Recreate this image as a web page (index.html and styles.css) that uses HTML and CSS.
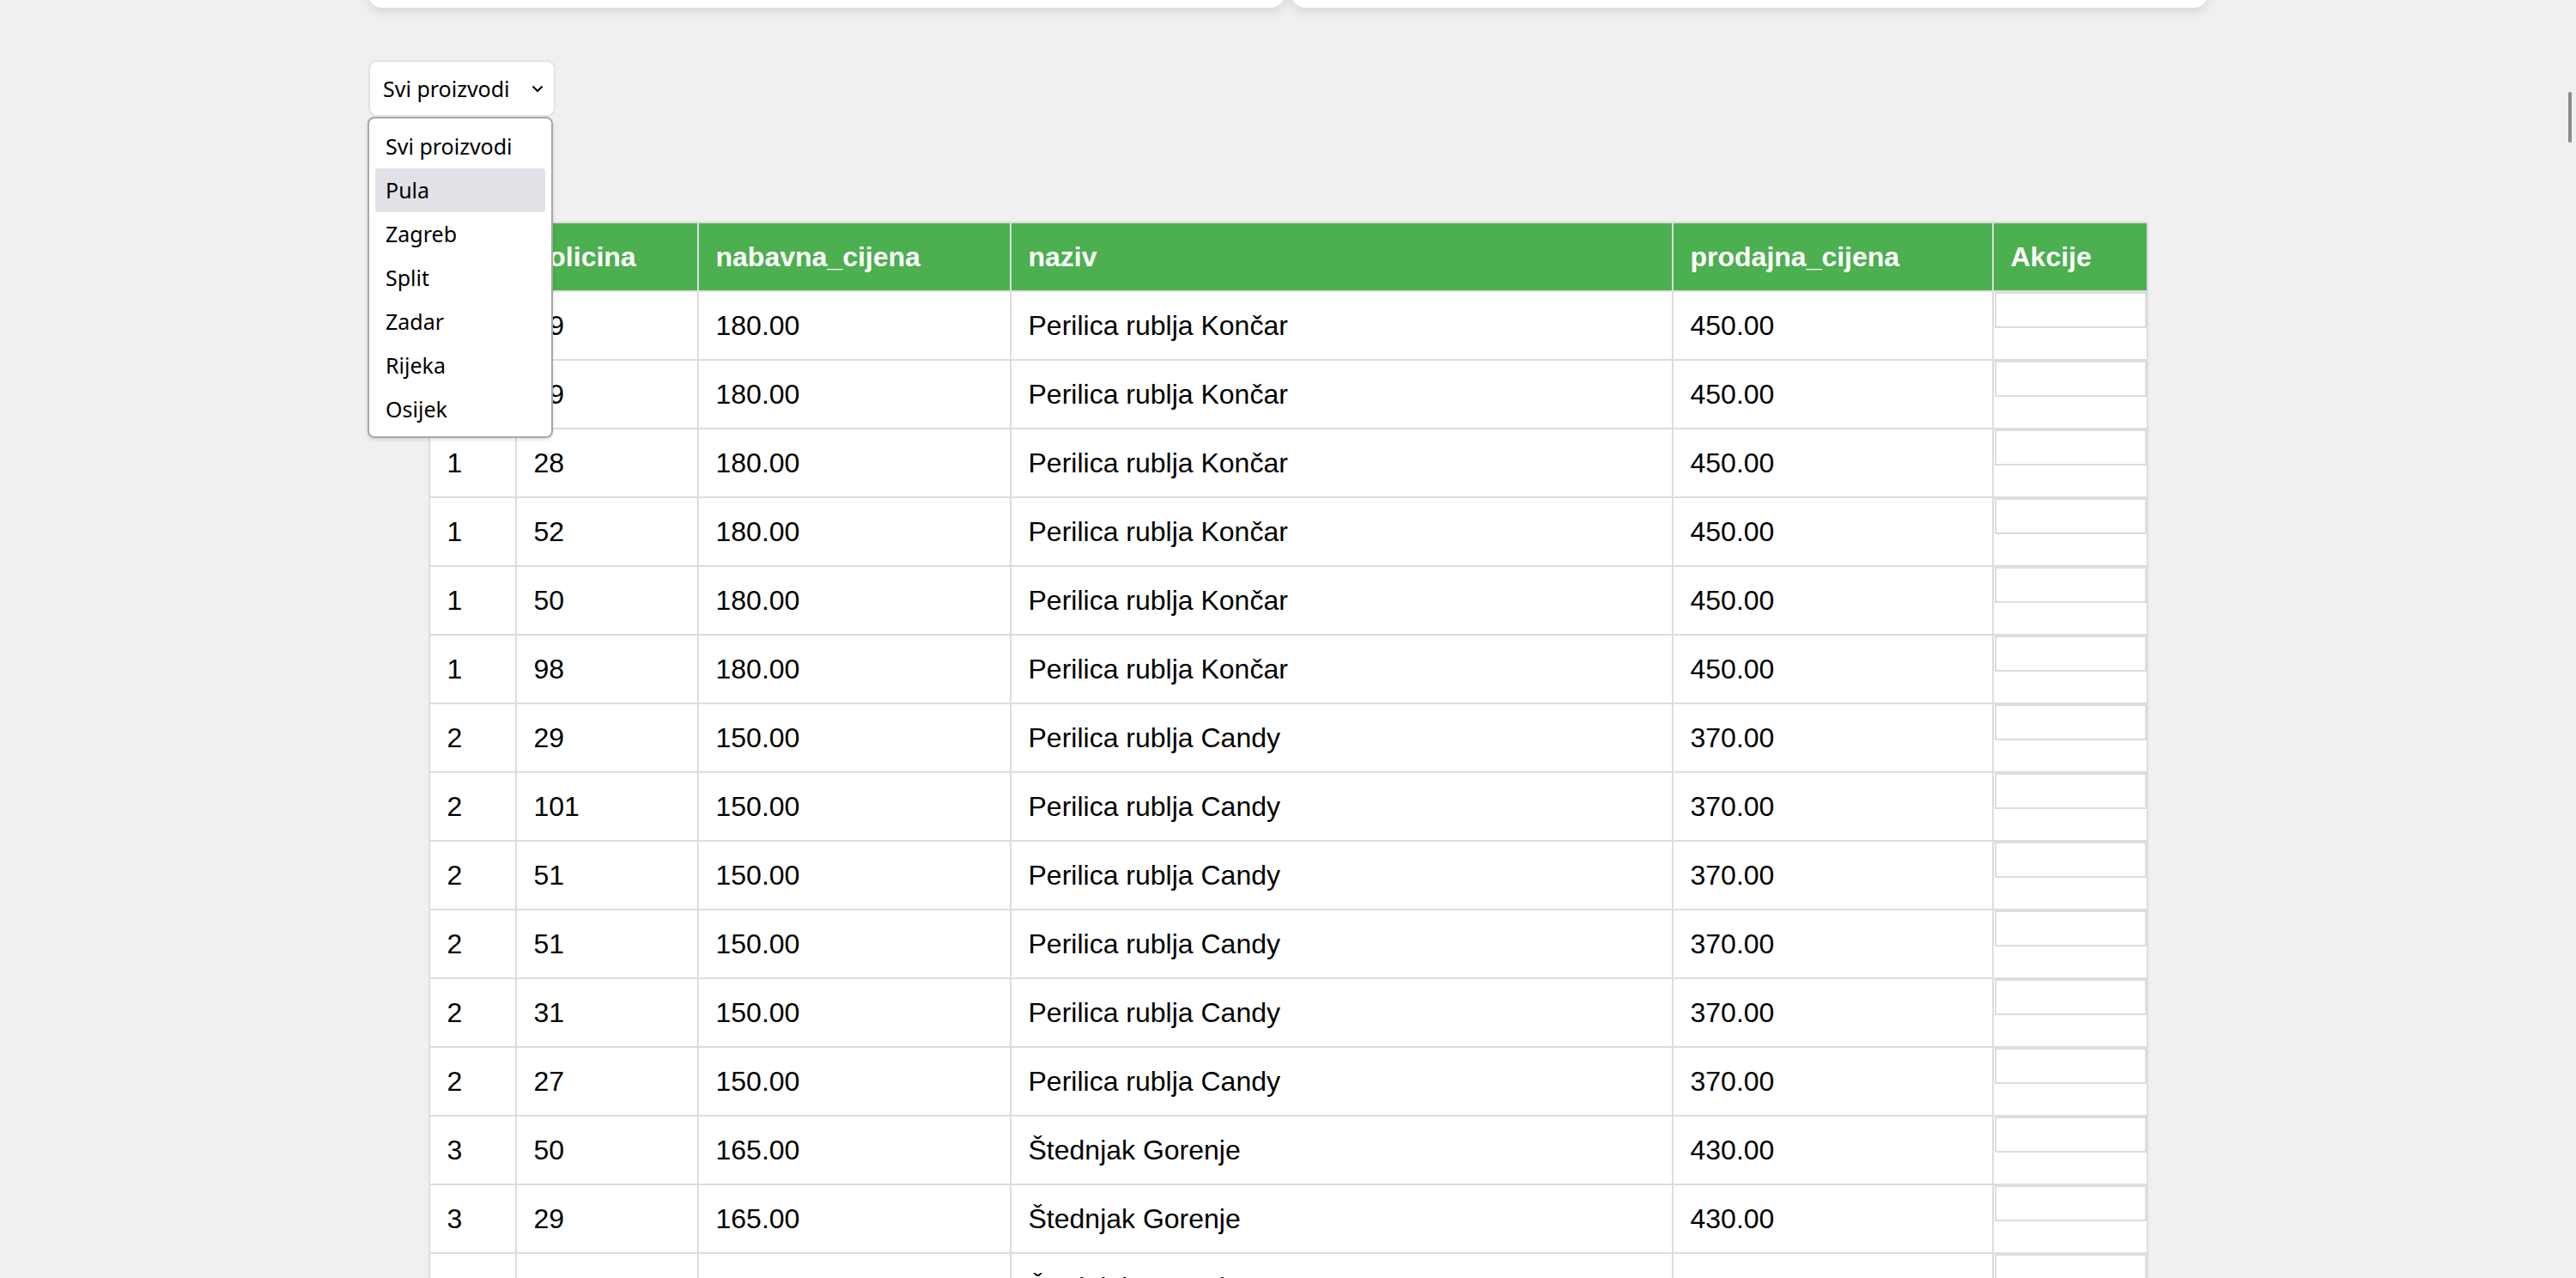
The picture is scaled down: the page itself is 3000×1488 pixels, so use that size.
FILE: index.html
```html
<!DOCTYPE html>
<html lang="hr">
<head>
<meta charset="utf-8">
<title>Proizvodi</title>
<link rel="stylesheet" href="styles.css">
</head>
<body>
<div class="wrap">
  <div class="cards">
    <div class="card"></div>
    <div class="card"></div>
  </div>
  <div class="filter">
    <div class="select">
      <span>Svi proizvodi</span>
      <svg class="chev" width="14" height="10" viewBox="0 0 14 10"><path d="M1.5 2.5 L7 8 L12.5 2.5" fill="none" stroke="#000" stroke-width="2"/></svg>
    </div>
    <div class="popup">
      <div class="opt">Svi proizvodi</div>
      <div class="opt hl">Pula</div>
      <div class="opt">Zagreb</div>
      <div class="opt">Split</div>
      <div class="opt">Zadar</div>
      <div class="opt">Rijeka</div>
      <div class="opt">Osijek</div>
    </div>
  </div>
</div>
<table class="grid">
  <colgroup>
    <col class="c1"><col class="c2"><col class="c3"><col class="c4"><col class="c5"><col class="c6">
  </colgroup>
  <thead>
    <tr><th>id</th><th>kolicina</th><th>nabavna_cijena</th><th>naziv</th><th>prodajna_cijena</th><th>Akcije</th></tr>
  </thead>
  <tbody>
    <tr><td>1</td><td>29</td><td>180.00</td><td>Perilica rublja Končar</td><td>450.00</td><td class="act"><div class="actbox"></div></td></tr>
    <tr><td>1</td><td>19</td><td>180.00</td><td>Perilica rublja Končar</td><td>450.00</td><td class="act"><div class="actbox"></div></td></tr>
    <tr><td>1</td><td>28</td><td>180.00</td><td>Perilica rublja Končar</td><td>450.00</td><td class="act"><div class="actbox"></div></td></tr>
    <tr><td>1</td><td>52</td><td>180.00</td><td>Perilica rublja Končar</td><td>450.00</td><td class="act"><div class="actbox"></div></td></tr>
    <tr><td>1</td><td>50</td><td>180.00</td><td>Perilica rublja Končar</td><td>450.00</td><td class="act"><div class="actbox"></div></td></tr>
    <tr><td>1</td><td>98</td><td>180.00</td><td>Perilica rublja Končar</td><td>450.00</td><td class="act"><div class="actbox"></div></td></tr>
    <tr><td>2</td><td>29</td><td>150.00</td><td>Perilica rublja Candy</td><td>370.00</td><td class="act"><div class="actbox"></div></td></tr>
    <tr><td>2</td><td>101</td><td>150.00</td><td>Perilica rublja Candy</td><td>370.00</td><td class="act"><div class="actbox"></div></td></tr>
    <tr><td>2</td><td>51</td><td>150.00</td><td>Perilica rublja Candy</td><td>370.00</td><td class="act"><div class="actbox"></div></td></tr>
    <tr><td>2</td><td>51</td><td>150.00</td><td>Perilica rublja Candy</td><td>370.00</td><td class="act"><div class="actbox"></div></td></tr>
    <tr><td>2</td><td>31</td><td>150.00</td><td>Perilica rublja Candy</td><td>370.00</td><td class="act"><div class="actbox"></div></td></tr>
    <tr><td>2</td><td>27</td><td>150.00</td><td>Perilica rublja Candy</td><td>370.00</td><td class="act"><div class="actbox"></div></td></tr>
    <tr><td>3</td><td>50</td><td>165.00</td><td>Štednjak Gorenje</td><td>430.00</td><td class="act"><div class="actbox"></div></td></tr>
    <tr><td>3</td><td>29</td><td>165.00</td><td>Štednjak Gorenje</td><td>430.00</td><td class="act"><div class="actbox"></div></td></tr>
    <tr><td>3</td><td>48</td><td>165.00</td><td>Štednjak Gorenje</td><td>430.00</td><td class="act"><div class="actbox"></div></td></tr>
  </tbody>
</table>
<div class="thumb"></div>
</body>
</html>
```

FILE: styles.css
```css
html, body {
  margin: 0;
  padding: 0;
  height: 1488px;
  overflow: hidden;
  background: #f0f0f0;
}

body {
  font-family: "Liberation Sans", Arial, sans-serif;
  color: #000;
}

.wrap {
  width: 2142px;
  margin: 0 auto;
}

.cards {
  display: flex;
  gap: 8px;
  margin-top: -111px;
}

.card {
  flex: 1;
  height: 120px;
  background: #fff;
  border-radius: 16px;
  box-shadow: 0 4px 14px rgba(0, 0, 0, 0.12);
}

.filter {
  position: relative;
  margin-top: 61px;
  width: 218px;
}

.select {
  box-sizing: border-box;
  width: 218px;
  height: 66px;
  background: #fff;
  border: 2px solid #e2e2e2;
  border-radius: 10px;
  display: flex;
  align-items: center;
  justify-content: space-between;
  padding: 0 12px 0 15px;
  font-family: "Noto Sans", "Open Sans", sans-serif;
  font-size: 25px;
  color: #000;
}

.chev {
  display: block;
}

.popup {
  position: absolute;
  top: 66px;
  left: -1px;
  box-sizing: border-box;
  width: 216px;
  height: 374px;
  background: #fff;
  border: 2px solid #a8a8a8;
  border-radius: 8px;
  box-shadow: 0 2px 4px rgba(0, 0, 0, 0.12);
  padding: 7px 7px;
  font-family: "Noto Sans", "Open Sans", sans-serif;
  font-size: 25px;
  z-index: 5;
}

.opt {
  height: 51px;
  line-height: 51px;
  padding-left: 12px;
  border-radius: 4px;
}

.opt.hl {
  background: #e1e1e7;
}

.grid {
  border-collapse: collapse;
  width: 2001px;
  margin: 122px auto 0;
  table-layout: fixed;
  font-size: 32px;
}

.c1 { width: 101px; }
.c2 { width: 212px; }
.c3 { width: 364px; }
.c4 { width: 771px; }
.c5 { width: 373px; }
.c6 { width: 180px; }

.grid th,
.grid td {
  border: 2px solid #ddd;
  padding: 20px 20px;
  line-height: 38px;
  text-align: left;
  white-space: nowrap;
}

.grid th {
  background: #4caf50;
  color: #fff;
  font-weight: bold;
}

.grid td {
  background: #fff;
}

.grid td.act {
  padding: 0 0 0 1px;
  vertical-align: top;
  height: 78px;
}

.actbox {
  box-sizing: border-box;
  height: 42px;
  border: 2px solid #ddd;
  background: #fff;
}

.thumb {
  position: fixed;
  top: 107px;
  right: 5px;
  width: 4px;
  height: 59px;
  border-radius: 2px;
  background: #8a8a8a;
}
```
